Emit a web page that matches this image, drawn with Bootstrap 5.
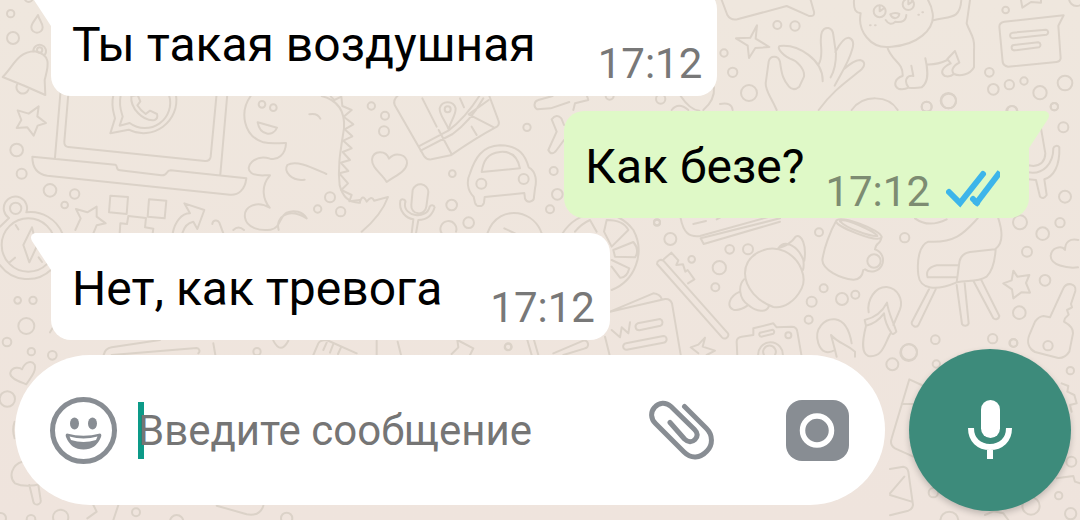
<!DOCTYPE html>
<html lang="ru">
<head>
<meta charset="utf-8">
<meta name="viewport" content="width=device-width, initial-scale=1">
<title>Чат</title>
<link href="https://cdn.jsdelivr.net/npm/bootstrap@5.3.0/dist/css/bootstrap.min.css" rel="stylesheet">
<style>
  body { background: linear-gradient(#efe7de, #efe4dd); font-family: Roboto, "Noto Sans", sans-serif; }
  .wallpaper { z-index: -1; fill: none; stroke: #dbd2c8; stroke-width: 6; stroke-linecap: round; stroke-linejoin: round; }
  .chat-log { gap: 15px; padding: 0 51px 9px; min-height: 0; }
  .bubble { border-radius: 20px; padding: 28px 15px 0 21px; height: 107px; color: #000; }
  .bubble-in { background: #fff; border-top-left-radius: 0; }
  .bubble-out { background: #dff9c7; border-top-right-radius: 0; padding-right: 29px; }
  .bubble-text { font-size: 48px; line-height: 56px; }
  .bubble-time { font-size: 42px; line-height: 49px; color: #787878; margin-bottom: 8px; }
  .bubble-out .bubble-time { color: #7d8c72; margin-bottom: 2px; }
  .tail { top: 0; width: 20px; height: 37px; }
  .tail-in { right: 100%; fill: #fff; }
  .tail-out { left: 100%; fill: #dff9c7; }
  .ticks { width: 54px; height: 38px; margin: 0 0 10px 16px; }
  .space-l { margin-right: 62px; }
  .space-m { margin-right: 48px; }
  .space-s { margin-right: 21px; }
  .composer-row { gap: 24px; padding: 0 9px 9px 15px; }
  .composer { height: 150px; border-radius: 75px; padding: 0 36px 0 35px; }
  .composer input { font-size: 42px; line-height: 56px; height: 57px; color: #000; background: none; outline: 0; min-width: 0; }
  .composer input::placeholder { color: #757575; opacity: 1; }
  .caret { left: 0; top: 0; width: 6px; height: 57px; background: #0c9a88; z-index: 0; }
  .field { margin-left: 21px; margin-right: 24px; }
  .icon-btn { color: #888d93; line-height: 0; }
  .clip-btn { margin-right: 71px; }
  .mic { width: 162px; height: 162px; background: #3d8b7b; box-shadow: 0 3px 6px #0003; line-height: 0; }
</style>
</head>
<body class="vh-100 overflow-hidden d-flex flex-column position-relative">

<svg class="wallpaper position-absolute top-0 start-0 w-100 h-100" viewBox="0 0 3240 1560" preserveAspectRatio="xMidYMid slice" aria-hidden="true">
  <!-- bell, laptop, dinosaur -->
  <g>
    <circle cx="32" cy="41" r="11"/><circle cx="39" cy="114" r="18"/><circle cx="86" cy="-6" r="12"/>
    <path d="M114 45C104 62 94 70 94 82A17 16 0 0 0 128 82C128 68 117 60 114 45Z"/>
    <circle cx="119" cy="150" r="8"/><path d="M100 154A19 19 0 1 1 134 165"/>
    <path d="M8 231C40 200 52 155 104 154C160 165 142 205 134 240L136 285Q70 255 8 231ZM51 254A18 18 0 0 0 85 270"/>
    <path d="M116 319L112 349L138 369L113 377L101 407L82 382L50 384L64 360L53 331L86 341Z"/>
    <circle cx="50" cy="450" r="19"/><circle cx="65" cy="521" r="15"/><circle cx="150" cy="571" r="19"/><circle cx="224" cy="582" r="14"/><circle cx="194" cy="615" r="10"/>
    <path d="M182 270L165 472M206 270L193 425Q192 440 205 441L615 483Q630 484 632 470L650 280M683 270L661 523M97 470L346 494C354 496 346 510 360 511L484 526C505 528 496 511 512 511L739 535C735 570 715 586 690 584L142 527C110 522 97 500 97 470Z"/>
    <path d="M340 285C332 322 342 340 345 355L331 400L386 389A99 99 0 0 0 528 285M362 285C355 325 367 340 368 350L359 377L389 369A76 76 0 0 0 507 285"/>
    <path d="M394 288C390 325 430 365 464 360Q475 355 471 342L450 332L437 342Q422 332 412 316L421 304L413 285Z"/>
    <circle cx="786" cy="313" r="10"/><circle cx="820" cy="323" r="10"/>
    <path d="M752 288C718 335 730 408 790 427C820 433 840 428 858 429C857 465 832 482 810 476C765 461 730 502 754 519C770 530 790 525 810 526C780 560 790 600 809 623C770 600 730 620 735 653C740 684 780 694 812 689C842 684 838 650 860 638C882 628 908 635 920 655M836 690C825 650 865 622 920 655M773 367L831 383C820 410 780 408 773 367M928 343Q952 338 961 356"/>
    <path d="M914 539C875 545 850 515 862 495C890 478 940 505 979 522M965 288C1010 300 1036 330 1032 385C1022 450 1012 500 1019 556C1030 600 1055 609 1080 608"/>
    <path d="M992 289L1003 300L1024 290L1027 318L1055 330L1031 350L1060 373L1034 388L1057 409L1030 422L1055 445L1028 456L1050 480L1022 488L1045 513L1018 520L1044 550L1024 570L1055 585L1048 604L1080 600"/>
    <circle cx="990" cy="592" r="15"/><circle cx="953" cy="627" r="11"/><circle cx="1022" cy="635" r="14"/>
    <path d="M331 587L384 591L380 642L327 637ZM447 598L499 602L494 655L443 650ZM359 700L361 670L381 672L385 648L438 654L435 682L460 686L458 700M228 627L262 637L290 620L290 650L317 670L290 676L280 700M228 627L242 655L226 690"/>
    <path d="M518 700C525 665 545 640 570 640L553 610L613 630L592 687L580 665Q555 670 547 700M637 672A11 11 0 0 1 658 668L670 700M700 690Q715 675 732 690"/>
  </g>
  <!-- pocket watch -->
  <g transform="translate(0 510)">
    <circle cx="47" cy="115" r="17"/><circle cx="85" cy="225" r="80"/><path d="M27 144A35 35 0 1 1 79 127A103 103 0 0 1 187 190M27 144L0 170M155 298A103 103 0 0 1 0 285M96 172L70 225L88 277L110 230ZM47 165L55 178M30 276L45 263M116 262L126 276"/>
    <circle cx="53" cy="391" r="10"/><circle cx="99" cy="391" r="11"/><circle cx="79" cy="468" r="24"/><circle cx="21" cy="516" r="13"/><circle cx="94" cy="545" r="11"/><circle cx="157" cy="556" r="13"/><path d="M150 487L162 467"/>
  </g>
  <!-- map, heart, car, microphone, plane, orange -->
  <g transform="translate(1080 270)">
    <circle cx="34" cy="48" r="11"/><circle cx="75" cy="77" r="12"/><circle cx="72" cy="124" r="15"/><circle cx="501" cy="112" r="11"/><circle cx="277" cy="251" r="10"/><circle cx="275" cy="345" r="16"/><circle cx="326" cy="398" r="16"/><circle cx="581" cy="243" r="12"/><circle cx="592" cy="313" r="16"/><circle cx="570" cy="358" r="12"/><circle cx="902" cy="27" r="14"/><circle cx="749" cy="17" r="12"/><circle cx="445" cy="770" r="10"/>
    <path d="M115 15Q98 30 104 45L192 198Q200 210 214 208L272 196Q345 145 412 109Q420 102 414 88L388 18M176 169L265 122Q315 85 360 15M182 182L278 132Q330 95 370 25M326 73L403 113M326 73L386 30M187 25L230 110M236 120L275 193M300 25L312 52M335 110L350 135"/>
    <path d="M266 118C255 90 238 75 239 55A25 25 0 0 1 287 55C287 80 272 90 266 118"/><circle cx="263" cy="58" r="9"/>
    <path d="M80 276C65 250 35 235 36 208C40 180 78 180 87 206C106 183 142 194 141 220C138 246 106 257 80 276Z"/>
    <path d="M330 250C345 205 365 168 420 166C480 166 497 200 506 232C530 245 530 275 525 295L522 320A14 14 0 0 1 495 326L493 309L374 321L372 338A14 14 0 0 1 345 338L341 320C320 300 320 270 330 250ZM365 246C370 215 380 190 420 186C460 182 475 210 480 235Z"/><circle cx="364" cy="281" r="15"/><circle cx="491" cy="267" r="15"/>
    <path d="M158 300A24 24 0 0 1 205 306L199 350A22 22 0 0 1 154 345ZM121 332C115 365 140 385 160 388L155 430M224 352C214 385 190 390 175 390L168 430M121 332A8 8 0 0 1 135 340C130 380 200 390 209 350A8 8 0 0 1 224 352"/>
    <path d="M245 430A24 24 0 1 1 288 425M382 430C400 380 440 365 475 370C510 377 535 400 545 430M433 415L465 430M0 335Q8 310 20 335Q35 315 42 332L84 321C70 360 35 400 5 425M578 18L535 30A15 15 0 0 0 532 58L572 55L628 36M575 88Q590 70 604 85L612 105M575 88L590 125L565 180Q575 200 590 180L612 150M640 60L645 40L685 30L680 15"/>
    <path d="M608 430A128 128 0 0 1 820 420A128 128 0 0 1 755 600M645 425A120 120 0 0 1 690 390L710 425M740 390L732 425L755 470L805 420Q790 390 740 390ZM760 480L820 456Q840 480 825 502L765 500ZM755 510L808 535Q800 565 780 563L755 530"/>
    <circle cx="931" cy="447" r="18"/><circle cx="891" cy="398" r="9"/>
  </g>
  <!-- sprout between the first two messages -->
  <path d="M2042 288Q2070 330 2098 332M2142 262Q2145 300 2110 330M2015 330Q2035 305 2065 330"/>
  <!-- top right: bubble, star, hand, dog, note -->
  <g transform="translate(2160 0)">
    <path d="M5 0L22 45Q32 62 52 58L200 18L265 47Q285 52 282 35L272 0M111 76L107 116L148 141L106 144L87 174L83 137L48 115L91 113Z"/>
    <circle cx="172" cy="75" r="12"/><circle cx="225" cy="78" r="14"/><circle cx="12" cy="159" r="11"/><circle cx="38" cy="217" r="14"/><circle cx="87" cy="279" r="24"/><circle cx="685" cy="302" r="23"/><circle cx="620" cy="320" r="15"/><circle cx="857" cy="30" r="10"/><circle cx="808" cy="217" r="13"/><circle cx="820" cy="268" r="16"/><circle cx="868" cy="254" r="14"/><circle cx="912" cy="243" r="11"/><circle cx="960" cy="278" r="20"/><circle cx="1035" cy="249" r="22"/><circle cx="1003" cy="320" r="11"/><circle cx="1070" cy="-5" r="23"/><circle cx="877" cy="333" r="15"/>
    <path d="M170 330C150 285 137 275 137 250L146 185C150 165 175 165 180 185C185 225 190 240 207 260Q220 275 238 260L252 230C255 205 230 182 210 176C180 160 170 140 180 138C235 132 310 180 308 244M296 193C315 160 294 125 306 95C315 78 338 80 340 105L348 160C348 190 342 215 332 232M346 156C360 130 374 110 388 114C404 120 400 138 396 150C385 190 360 225 344 257M372 207C390 192 404 180 420 180C438 184 434 200 425 208C380 245 340 270 296 330M395 330C430 282 505 285 533 330M0 312Q35 305 38 330"/>
    <path d="M402 0C400 30 408 38 422 40C412 90 450 150 515 140C590 135 645 90 638 40C635 20 630 10 624 0M640 61C690 48 720 60 724 0M750 0L740 70C750 100 765 110 762 150V202C750 225 718 230 702 222C692 212 698 198 718 188L705 153L682 177L692 190C665 202 660 220 675 228Q690 232 702 222M620 193Q650 195 682 180M502 142C515 185 550 185 548 228C523 235 520 258 535 266Q550 270 566 263C550 242 560 225 580 228L574 197M616 175C626 220 625 248 605 262Q585 266 566 263"/>
    <circle cx="479" cy="34" r="18"/><circle cx="565" cy="13" r="17"/><path d="M479 17V34L493 24M565 -4V13L578 4M511 43Q525 35 538 42Q537 53 525 55Q514 52 511 43M497 60Q510 80 526 65Q558 70 559 45M450 76H452M465 76H467M595 44H597M607 37H609M903 0L907 23L933 6L963 8V0"/>
    <path d="M853 65L1031 46L1015 77L1022 175Q1020 185 1010 186L864 200Q850 197 848 186L838 80Q838 68 853 65ZM878 98L978 89A8 8 0 0 1 980 104L880 115A8 8 0 0 1 878 98ZM882 135L955 127A8 8 0 0 1 957 142L884 151A8 8 0 0 1 882 135Z"/>
  </g>
  <!-- beside the sent message -->
  <g transform="translate(2400 300)">
    <circle cx="790" cy="82" r="15"/><circle cx="763" cy="20" r="11"/><circle cx="795" cy="290" r="18"/><circle cx="380" cy="20" r="15"/><circle cx="446" cy="3" r="22"/><circle cx="635" cy="34" r="16"/>
    <path d="M723 85L736 160Q735 195 700 198L685 196M685 217C730 225 760 190 760 145A10 10 0 0 1 778 142C780 200 760 230 733 238L740 285Q730 300 720 290L708 240L685 238"/>
  </g>
  <!-- toothbrush, croissant, mug, chair, sandals, key -->
  <g transform="translate(1800 630)">
    <circle cx="171" cy="37" r="9"/><circle cx="275" cy="148" r="10"/><circle cx="358" cy="173" r="20"/><circle cx="389" cy="118" r="13"/><circle cx="444" cy="118" r="15"/><circle cx="346" cy="232" r="12"/><circle cx="657" cy="67" r="12"/><circle cx="671" cy="235" r="12"/><circle cx="635" cy="275" r="15"/><circle cx="726" cy="267" r="18"/><circle cx="766" cy="254" r="12"/><circle cx="626" cy="329" r="12"/><circle cx="914" cy="83" r="14"/><circle cx="927" cy="426" r="24"/><circle cx="1006" cy="389" r="13"/><circle cx="1178" cy="386" r="14"/><circle cx="1240" cy="399" r="12"/><circle cx="1258" cy="308" r="19"/><circle cx="1335" cy="211" r="16"/><circle cx="1281" cy="125" r="15"/><circle cx="1328" cy="71" r="19"/><circle cx="1380" cy="38" r="14"/><circle cx="1260" cy="37" r="21"/>
    <path d="M190 152L384 370A11 11 0 0 1 366 382L171 162A12 12 0 0 1 190 152ZM192 147L214 128L235 151L229 165L249 163L256 185L263 180L283 208L264 220M242 25C250 65 265 82 300 78L545 10M302 85L540 25M302 85L311 102L540 35M280 42L318 33M350 28L365 20"/>
    <path d="M435 190C435 135 500 100 555 124C605 150 620 205 605 235C585 275 550 297 520 291C475 275 435 235 435 190ZM432 208C415 225 415 265 445 285C470 307 500 307 506 290M420 245C385 260 380 290 400 299Q420 303 442 287M535 115C555 85 595 110 610 150C612 165 612 170 609 180M535 115Q570 105 587 80C605 70 620 105 613 152"/>
    <path d="M708 34C690 65 672 115 667 150C668 180 720 205 760 209Q785 210 790 180M845 80C840 110 830 90 825 118M825 118A34 34 0 1 1 795 178M708 34C715 10 845 60 845 82C830 100 710 50 708 34ZM720 34C730 20 825 65 832 78C810 80 740 55 720 34"/><circle cx="822" cy="153" r="20"/>
    <path d="M1195 25C1208 65 1212 100 1185 118L1110 126C1085 130 1078 145 1077 165L1070 217C1010 243 960 240 955 195C950 150 958 105 985 95C1070 100 1095 65 1133 25M1187 117C1185 150 1180 180 1160 200C1130 218 1105 210 1070 217M1077 165L1010 166C985 172 977 185 983 202H1070M987 238L936 335A11 11 0 0 0 956 344L1007 238M1070 225L1086 342A11 11 0 0 0 1106 340L1094 220M1122 216L1180 325A11 11 0 0 0 1198 318L1143 208M945 25Q985 55 1040 28"/>
    <path d="M1240 182L1252 200L1288 195L1278 219L1290 248L1264 247L1240 265L1236 238L1210 220L1235 211ZM1434 172C1400 176 1352 165 1352 138C1354 112 1385 105 1395 120C1395 95 1410 85 1435 90"/>
    <path d="M1390 235C1400 215 1430 220 1426 243L1413 282L1416 292L1401 300L1406 314L1395 325L1392 335C1410 345 1420 355 1419 370L1408 425Q1395 445 1375 444L1305 426C1285 415 1280 395 1288 375L1305 335Q1315 320 1330 318L1350 322Z"/><circle cx="1344" cy="407" r="14"/>
    <path d="M806 307C800 270 825 230 860 231C895 235 910 270 900 298L880 345M794 330Q840 320 861 278C865 310 880 335 889 365Q880 375 875 370Q855 340 852 310Q830 340 798 347ZM798 347C785 400 785 430 805 438C850 445 855 395 873 368M655 400C640 355 675 325 705 328C740 333 750 370 755 400M655 400Q670 440 705 420L693 375C715 400 735 400 765 425V440M705 420L710 440"/>
    <path d="M412 440L410 395Q410 382 425 380L460 375V355L520 340L530 352L575 350Q590 350 592 365L605 440M475 440A37 37 0 1 1 548 440M492 435A19 19 0 1 1 525 435M480 368L518 359A7 7 0 0 1 520 371L484 380A7 7 0 0 1 480 368"/><circle cx="565" cy="376" r="9"/>
    <path d="M30 305L160 250Q180 252 185 267M30 305L195 267Q210 265 216 280L243 440M15 380L30 440M35 360L60 382L65 352L85 370L90 337M113 340L180 327A11 11 0 0 1 182 347L118 361A11 11 0 0 1 113 340ZM78 400L190 378A9 9 0 0 1 190 398L80 419A9 9 0 0 1 78 400M315 383L308 410L345 422L320 435M315 383L295 404L272 412L295 430"/>
  </g>
  <!-- bottom left corner and bottom strip -->
  <g transform="translate(0 990)">
    <path d="M79 163C60 155 27 145 31 128C37 108 60 112 66 118C75 95 95 90 104 104C110 125 90 145 79 163ZM67 395C35 405 25 440 45 460C70 472 95 470 130 460M88 465L100 515A10 10 0 0 0 122 510L115 465M311 75Q315 55 335 52L480 30M335 75L590 54A9 9 0 0 1 595 70M640 40L646 75M820 32Q842 75 865 32M44 275Q35 300 44 325"/>
    <circle cx="22" cy="207" r="23"/><circle cx="408" cy="547" r="12"/><circle cx="182" cy="562" r="23"/><circle cx="530" cy="575" r="20"/><circle cx="860" cy="565" r="17"/><circle cx="93" cy="568" r="13"/><circle cx="2" cy="565" r="16"/><circle cx="771" cy="65" r="11"/>
    <path d="M280 525L290 545L262 565M340 570L355 525M650 527L740 553Q780 560 790 527"/>
    <path d="M940 75L955 40Q960 30 980 30L1070 70M980 38L970 60M1000 42L990 68M1024 50L1014 72M1130 32V75M1193 35L1203 75M1355 72L1375 52L1372 30L1420 55L1410 75M1582 30L1595 75M1602 30L1615 75M1660 70L1750 32A10 10 0 0 1 1755 55L1690 75"/><circle cx="1524" cy="51" r="10"/>
  </g>
  <!-- around the record button -->
  <g transform="translate(2670 1020)">
    <circle cx="56" cy="38" r="25"/><circle cx="7" cy="73" r="18"/><circle cx="139" cy="72" r="11"/><circle cx="371" cy="9" r="11"/><circle cx="541" cy="92" r="11"/><circle cx="544" cy="365" r="15"/><circle cx="506" cy="467" r="11"/><circle cx="542" cy="521" r="17"/><circle cx="423" cy="498" r="26"/><circle cx="130" cy="458" r="14"/><circle cx="178" cy="542" r="27"/>
    <path d="M95 135L58 118L5 295Q-2 315 15 325L70 350M35 192H70M0 387L40 380Q52 382 55 395L69 495Q67 508 55 512L0 526M0 465L65 485M0 460L43 410M515 130L535 138L532 155L553 165L560 190L540 195L545 215M500 415L550 408L555 425L570 430M285 525L310 514L340 520L355 540"/>
  </g>
</svg>

<main class="chat-log flex-grow-1 d-flex flex-column justify-content-end">
  <div class="bubble bubble-in position-relative d-flex align-items-end align-self-start flex-shrink-0">
    <svg class="tail tail-in position-absolute" viewBox="0 0 20 37" aria-hidden="true"><path d="M20 0H4Q-2 2 1 8L20 37Z"/></svg>
    <span class="bubble-text align-self-start space-l">Ты такая воздушная</span>
    <time class="bubble-time">17:12</time>
  </div>
  <div class="bubble bubble-out position-relative d-flex align-items-end align-self-end flex-shrink-0">
    <svg class="tail tail-out position-absolute" viewBox="0 0 20 37" aria-hidden="true"><path d="M0 0H16Q22 2 19 8L0 37Z"/></svg>
    <span class="bubble-text align-self-start space-s">Как безе?</span>
    <time class="bubble-time">17:12</time>
    <svg class="ticks" viewBox="0 0 54 38" role="img" aria-label="Прочитано" fill="none" stroke="#3db5ea" stroke-width="6"><path stroke-linecap="round" d="M3 22L14 33L37 4M27 29L31 33"/><path d="M29 35L54 2"/></svg>
  </div>
  <div class="bubble bubble-in position-relative d-flex align-items-end align-self-start flex-shrink-0">
    <svg class="tail tail-in position-absolute" viewBox="0 0 20 37" aria-hidden="true"><path d="M20 0H4Q-2 2 1 8L20 37Z"/></svg>
    <span class="bubble-text align-self-start space-m">Нет, как тревога</span>
    <time class="bubble-time">17:12</time>
  </div>
</main>

<form class="composer-row d-flex align-items-center flex-shrink-0">
  <div class="composer bg-white flex-grow-1 d-flex align-items-center">
    <button type="button" class="icon-btn border-0 bg-transparent p-0" aria-label="Эмодзи">
      <svg width="67" height="67" viewBox="0 0 67 67" fill="currentColor"><circle cx="33.500" cy="33.500" r="31" fill="none" stroke="currentColor" stroke-width="5"/><ellipse cx="24.500" cy="26.500" rx="4.500" ry="6"/><ellipse cx="42.500" cy="26.500" rx="4.500" ry="6"/><path d="M17 36.500Q33.500 41 50 36.500Q52 37 51 40Q46 52.500 33.500 52.500Q21 52.500 16 40Q15 37 17 36.500Z"/><path fill="#fff" d="M19.500 39.500Q33.500 43.500 47.500 39.500L46 43Q33.500 47 21 43Z"/></svg>
    </button>
    <div class="field position-relative flex-grow-1 d-flex">
      <span class="caret position-absolute"></span>
      <input type="text" class="position-relative border-0 p-0 w-100" placeholder="Введите сообщение" aria-label="Введите сообщение">
    </div>
    <button type="button" class="icon-btn clip-btn border-0 bg-transparent p-0" aria-label="Прикрепить">
      <svg width="66" height="60" viewBox="0 0 66 60" fill="none" stroke="currentColor" stroke-width="5" stroke-linecap="round" stroke-linejoin="round"><path d="M35.500 6.500L57.500 28.500C64 35 64 45 58 51C51 58.500 42 59 35 52L6.500 23.500C1.500 18.500 1.500 12 5.500 7.500C10 2 17 2 22 6.500L45.500 29.500C49 33 49 36.500 46 39.500C43 42.500 39 42.500 35.500 39L21 22.500"/></svg>
    </button>
    <button type="button" class="icon-btn border-0 bg-transparent p-0" aria-label="Камера">
      <svg width="63" height="61" viewBox="0 0 63 61"><rect width="63" height="61" rx="16" fill="currentColor"/><circle cx="31" cy="30.500" r="14.500" fill="none" stroke="#fff" stroke-width="5.500"/></svg>
    </button>
  </div>
  <button type="button" class="mic border-0 rounded-circle p-0 flex-shrink-0" aria-label="Голосовое сообщение">
    <svg width="46" height="62" viewBox="0 0 46 62" fill="none"><rect x="14" y="1" width="19" height="38" rx="9.500" fill="#fff"/><path d="M4 29C4 41 12 48 23 48S42 41 42 29M23 48V60" stroke="#fff" stroke-width="6"/></svg>
  </button>
</form>

<script src="https://cdn.jsdelivr.net/npm/bootstrap@5.3.0/dist/js/bootstrap.bundle.min.js"></script>
</body>
</html>
